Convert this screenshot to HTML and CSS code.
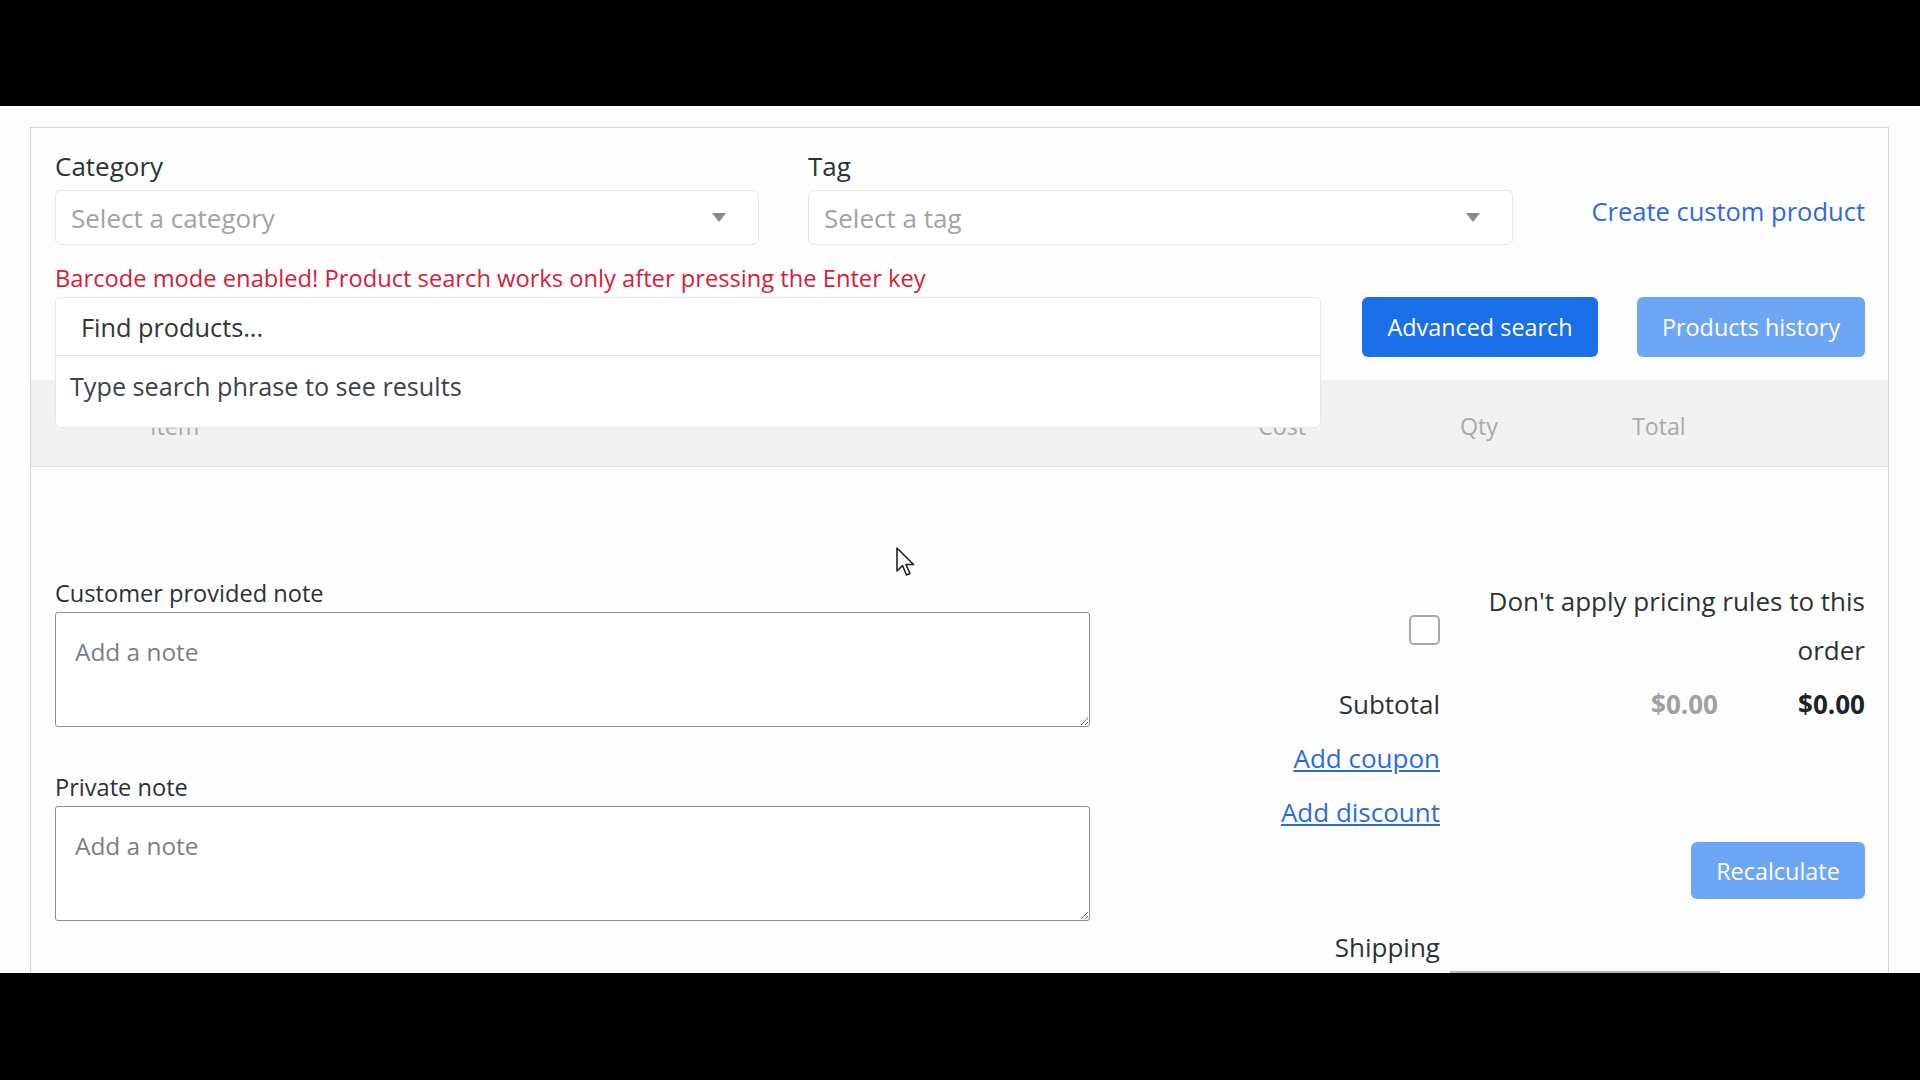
FILE: index.html
```html
<!DOCTYPE html>
<html lang="en">
<head>
  <meta charset="UTF-8" />
  <title>Edit order</title>
  <link rel="stylesheet" href="styles.css">
</head>
<body>

  <div class="letterbox"></div>

  <div class="stage">
    <div class="panel">

      <div class="filters">
        <div class="field field-category">
          <label>Category</label>
          <div class="select">
            <span class="placeholder">Select a category</span>
            <span class="caret"></span>
          </div>
        </div>
        <div class="field field-tag">
          <label>Tag</label>
          <div class="select">
            <span class="placeholder">Select a tag</span>
            <span class="caret"></span>
          </div>
        </div>
        <a class="custom-link" href="#">Create custom product</a>
      </div>

      <p class="notice">Barcode mode enabled! Product search works only after pressing the Enter key</p>

      <div class="search-row">
        <div class="search">
          <div class="search-input">Find products...</div>
          <div class="search-results">Type search phrase to see results</div>
        </div>
        <button class="btn btn-primary">Advanced search</button>
        <button class="btn btn-light">Products history</button>
      </div>

      <div class="items-head">
        <span class="col-item">Item</span>
        <span class="col-cost">Cost</span>
        <span class="col-qty">Qty</span>
        <span class="col-total">Total</span>
      </div>

      <div class="order-bottom">
        <div class="notes">
          <label>Customer provided note</label>
          <textarea placeholder="Add a note"></textarea>

          <label class="private-label">Private note</label>
          <textarea placeholder="Add a note"></textarea>
        </div>

        <div class="totals">
          <div class="t-row t-pricing">
            <div class="t-label"><input type="checkbox" class="check" /></div>
            <div class="t-wide">Don't apply pricing rules to this order</div>
          </div>
          <div class="t-row">
            <div class="t-label">Subtotal</div>
            <div class="t-val muted">$0.00</div>
            <div class="t-total">$0.00</div>
          </div>
          <div class="t-row">
            <div class="t-label"><a href="#">Add coupon</a></div>
          </div>
          <div class="t-row">
            <div class="t-label"><a href="#">Add discount</a></div>
          </div>
          <div class="t-row t-actions">
            <button class="btn btn-light btn-recalc">Recalculate</button>
          </div>
          <div class="t-row t-shipping">
            <div class="t-label">Shipping</div>
          </div>
          <div class="t-row">
            <div class="t-label"></div>
            <div class="shipping-select"></div>
          </div>
        </div>
      </div>

    </div>

    <svg class="cursor" width="20" height="31" viewBox="0 0 20 31">
      <path d="M1 1 L1 24 L6.5 18.5 L10.5 28 L14 26.5 L10 17.5 L17.5 17.5 Z" fill="#fff" stroke="#222" stroke-width="1.6" stroke-linejoin="round"/>
    </svg>
  </div>

  <div class="letterbox bottom"></div>

</body>
</html>
```

FILE: styles.css
```css
* {
  box-sizing: border-box;
}

body {
  margin: 0;
  font-family: "Open Sans", "Noto Sans", sans-serif;
  font-size: 26px;
  color: #2c3338;
  background: #000;
}

.letterbox {
  height: 106px;
  background: #000;
}

.letterbox.bottom {
  height: 107px;
}

.stage {
  position: relative;
  height: 867px;
  overflow: hidden;
  background: #fdfdfd;
  padding: 21px 31px 0 30px;
}

.panel {
  height: 100%;
  border: 1px solid #d6d6d6;
  border-bottom: none;
  background: #fdfdfd;
}

/* filters */

.filters {
  display: flex;
  align-items: flex-end;
  padding: 23px 23px 0 24px;
}

.field label {
  display: block;
  font-size: 26px;
  line-height: 30px;
  margin-bottom: 9px;
  color: #2c3338;
}

.field-category {
  width: 704px;
}

.field-tag {
  width: 705px;
  margin-left: 49px;
}

.select {
  display: flex;
  align-items: center;
  justify-content: space-between;
  height: 55px;
  border: 1px solid #e6e6e6;
  border-radius: 6px;
  padding: 0 32px 0 15px;
  background: #fff;
}

.placeholder {
  color: #a3a3a3;
  font-size: 26px;
}

.caret {
  width: 0;
  height: 0;
  border-left: 7px solid transparent;
  border-right: 7px solid transparent;
  border-top: 9px solid #8a8a8a;
}

.custom-link {
  margin-left: auto;
  margin-bottom: 19px;
  line-height: 30px;
  font-size: 25.5px;
  color: #2f6bd8;
  text-decoration: none;
}

.notice {
  margin: 18px 0 0;
  padding: 0 24px;
  line-height: 30px;
  font-size: 23.7px;
  color: #d21f3c;
}

/* search */

.search-row {
  display: flex;
  align-items: flex-start;
  margin-top: 4px;
  padding: 0 23px 0 24px;
}

.search {
  position: relative;
  flex: 1;
}

.search-input {
  height: 59px;
  line-height: 59px;
  padding-left: 25px;
  border: 1px solid #e6e6e6;
  border-radius: 6px 6px 0 0;
  background: #fff;
  font-size: 25.3px;
  color: #333;
}

.search-results {
  position: absolute;
  top: 100%;
  left: 0;
  right: 0;
  height: 72px;
  padding: 14px 14px 0;
  line-height: 32px;
  border: 1px solid #e6e6e6;
  border-top: none;
  border-radius: 0 0 6px 6px;
  background: #fff;
  font-size: 25.2px;
  color: #3c434a;
  z-index: 2;
}

.btn {
  height: 60px;
  padding: 0 24px;
  border: none;
  border-radius: 6px;
  font-family: inherit;
  font-size: 23.4px;
  color: #fff;
}

.btn-primary {
  width: 236px;
  margin-left: 41px;
  background: #1b6fe8;
}

.btn-light {
  background: #6ea6f6;
}

.search-row .btn-light {
  width: 228px;
  margin-left: 39px;
}

/* items table head */

.items-head {
  display: flex;
  align-items: center;
  height: 87px;
  margin-top: 23px;
  padding-top: 5px;
  background: #f1f1f1;
  border-bottom: 1px solid #dedede;
  color: #a7aaad;
  font-size: 23.2px;
}

.col-item {
  flex: 1;
  padding-left: 119px;
}

.col-cost {
  width: 150px;
  text-align: right;
}

.col-qty {
  width: 326px;
  padding-left: 154px;
}

.col-total {
  width: 256px;
}

/* notes + totals */

.order-bottom {
  display: flex;
  margin-top: 110px;
  padding: 0 23px 0 24px;
}

.notes {
  width: 1035px;
  padding-top: 2px;
}

.notes label {
  display: block;
  font-size: 23.6px;
  line-height: 28px;
  margin-bottom: 5px;
  color: #2c3338;
}

.notes .private-label {
  margin-top: 46px;
}

.notes textarea {
  display: block;
  width: 100%;
  height: 115px;
  padding: 25px 19px;
  border: 1px solid #8c8f94;
  border-radius: 3px;
  background: #fff;
  font-family: inherit;
  font-size: 24.4px;
  line-height: 28px;
}

.notes textarea::placeholder {
  color: #7b8085;
}

.totals {
  flex: 1;
}

.t-row {
  display: flex;
  align-items: center;
  line-height: 49px;
  margin-bottom: 5px;
}

.t-label {
  width: 350px;
  text-align: right;
}

.t-label a {
  color: #2f6bd8;
}

.t-wide {
  flex: 1;
  padding-left: 30px;
  text-align: right;
}

.t-val {
  width: 278px;
  text-align: right;
  font-weight: bold;
}

.t-total {
  flex: 1;
  text-align: right;
  font-weight: bold;
  color: #1d2327;
}

.muted {
  color: #a0a0a0;
}

.check {
  appearance: none;
  width: 31px;
  height: 30px;
  margin: 2px 0 0;
  vertical-align: middle;
  border: 2px solid #a7aaad;
  border-radius: 5px;
  background: #fff;
}

.t-actions {
  justify-content: flex-end;
}

.btn-recalc {
  width: 174px;
  height: 57px;
}

.t-shipping {
  margin-top: 24px;
}

.shipping-select {
  width: 270px;
  height: 40px;
  margin: -6px 0 0 10px;
  border-top: 2px solid #b4b4bb;
}

.cursor {
  position: absolute;
  left: 896px;
  top: 441px;
}
```
